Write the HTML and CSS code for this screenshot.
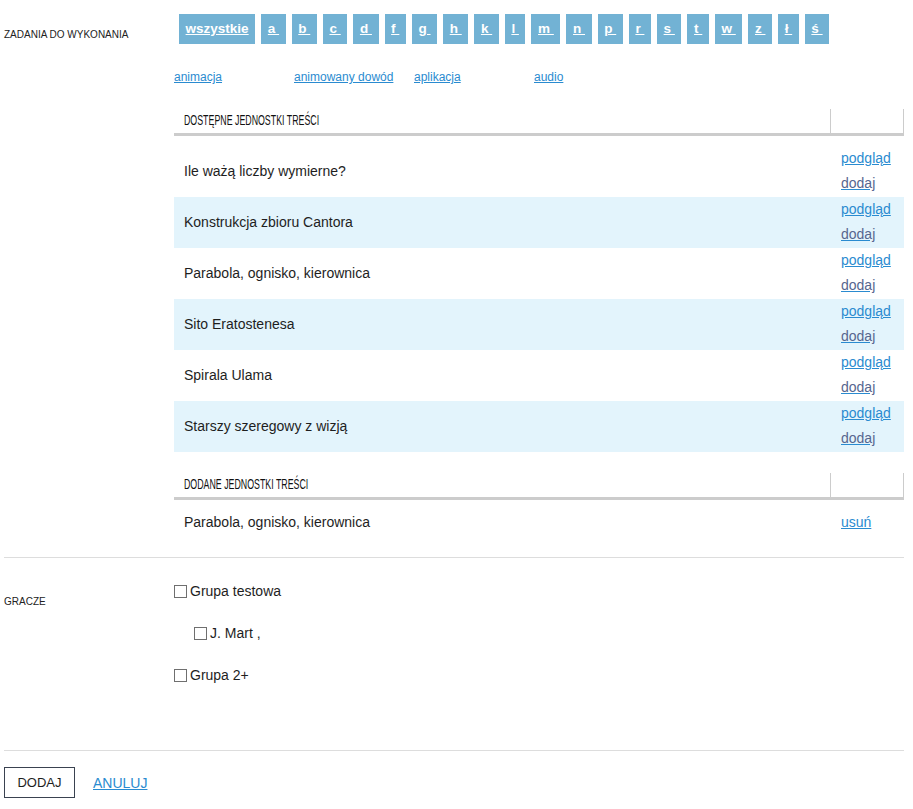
FILE: index.html
```html
<!DOCTYPE html>
<html lang="pl">
<head>
<meta charset="utf-8">
<title>Zadania</title>
<link rel="stylesheet" href="styles.css">
</head>
<body>
<div class="page">
  <section class="section tasks">
    <div class="label label-tasks">ZADANIA DO WYKONANIA</div>
    <div class="content">
      <nav class="letters">
        <a href="#" class="letter">wszystkie</a>
        <a href="#" class="letter">a&nbsp;</a>
        <a href="#" class="letter">b&nbsp;</a>
        <a href="#" class="letter">c&nbsp;</a>
        <a href="#" class="letter">d&nbsp;</a>
        <a href="#" class="letter">f&nbsp;</a>
        <a href="#" class="letter">g&nbsp;</a>
        <a href="#" class="letter">h&nbsp;</a>
        <a href="#" class="letter">k&nbsp;</a>
        <a href="#" class="letter">l&nbsp;</a>
        <a href="#" class="letter">m&nbsp;</a>
        <a href="#" class="letter">n&nbsp;</a>
        <a href="#" class="letter">p&nbsp;</a>
        <a href="#" class="letter">r&nbsp;</a>
        <a href="#" class="letter">s&nbsp;</a>
        <a href="#" class="letter">t&nbsp;</a>
        <a href="#" class="letter">w&nbsp;</a>
        <a href="#" class="letter">z&nbsp;</a>
        <a href="#" class="letter">ł&nbsp;</a>
        <a href="#" class="letter">ś&nbsp;</a>
      </nav>
      <div class="cats">
        <span class="cat"><a href="#">animacja</a></span>
        <span class="cat"><a href="#">animowany dowód</a></span>
        <span class="cat"><a href="#">aplikacja</a></span>
        <span class="cat"><a href="#">audio</a></span>
      </div>

      <div class="thead">
        <div class="th-main"><span class="th-text">DOSTĘPNE JEDNOSTKI TREŚCI</span></div>
        <div class="th-side"></div>
      </div>
      <div class="tbody">
        <div class="tr"><div class="td-main">Ile ważą liczby wymierne?</div><div class="td-side"><a href="#">podgląd</a><a href="#" class="visited">dodaj</a></div></div>
        <div class="tr alt"><div class="td-main">Konstrukcja zbioru Cantora</div><div class="td-side"><a href="#">podgląd</a><a href="#" class="visited">dodaj</a></div></div>
        <div class="tr"><div class="td-main">Parabola, ognisko, kierownica</div><div class="td-side"><a href="#">podgląd</a><a href="#" class="visited">dodaj</a></div></div>
        <div class="tr alt"><div class="td-main">Sito Eratostenesa</div><div class="td-side"><a href="#">podgląd</a><a href="#" class="visited">dodaj</a></div></div>
        <div class="tr"><div class="td-main">Spirala Ulama</div><div class="td-side"><a href="#">podgląd</a><a href="#" class="visited">dodaj</a></div></div>
        <div class="tr alt"><div class="td-main">Starszy szeregowy z wizją</div><div class="td-side"><a href="#">podgląd</a><a href="#" class="visited">dodaj</a></div></div>
      </div>

      <div class="thead thead-added">
        <div class="th-main"><span class="th-text">DODANE JEDNOSTKI TREŚCI</span></div>
        <div class="th-side"></div>
      </div>
      <div class="tbody">
        <div class="tr tr-single"><div class="td-main">Parabola, ognisko, kierownica</div><div class="td-side"><a href="#">usuń</a></div></div>
      </div>
    </div>
  </section>

  <hr class="divider divider-first">

  <section class="section players">
    <div class="label label-players">GRACZE</div>
    <div class="content checks">
      <label class="check"><input type="checkbox"><span>Grupa testowa</span></label>
      <label class="check check-nested"><input type="checkbox"><span>J. Mart ,</span></label>
      <label class="check"><input type="checkbox"><span>Grupa 2+</span></label>
    </div>
  </section>

  <hr class="divider divider-second">

  <div class="actions">
    <button class="btn" type="button">DODAJ</button>
    <a href="#" class="cancel">ANULUJ</a>
  </div>
</div>
</body>
</html>
```
FILE: styles.css
```css
html, body {
  margin: 0;
  padding: 0;
  background: #fff;
}
body {
  font-family: "Liberation Sans", Arial, sans-serif;
  color: #1e1e1e;
  font-size: 14px;
}
.page {
  width: 900px;
  padding: 14px 4px 0 4px;
}
.section {
  display: grid;
  grid-template-columns: 170px 730px;
}
.label {
  font-size: 10px;
  line-height: 12px;
  color: #222;
}
.label-tasks { padding-top: 15px; }
.label-players { padding-top: 38px; }

.letters {
  display: flex;
  gap: 6px;
  margin-left: 5px;
}
.letter {
  display: block;
  height: 30px;
  line-height: 30px;
  padding: 0 6.6px;
  background: #72b2d4;
  color: #fff;
  font-weight: bold;
  font-size: 13.5px;
  text-decoration: underline;
}
.cats {
  display: flex;
  margin-top: 26px;
  line-height: 14px;
  font-size: 12px;
}
.cat { width: 120px; }
a { color: #2a8bd0; }

.thead {
  display: flex;
  margin-top: 24px;
  height: 25px;
  border-bottom: 3px solid #cccccc;
}
.thead-added { margin-top: 20px; }
.th-main {
  flex: 1;
  padding-left: 10px;
  line-height: 25px;
  font-size: 14px;
  color: #111;
  white-space: nowrap;
}
.th-text {
  display: inline-block;
  transform: scaleX(0.63);
  transform-origin: left center;
}
.th-side {
  width: 72px;
  margin-top: 1px;
  border-left: 1px solid #cccccc;
  border-right: 1px solid #cccccc;
}
.tbody { margin-top: 10px; }
.tr {
  display: flex;
  height: 51px;
}
.tr.alt { background: #e3f4fc; }
.tr-single { height: 25px; }
.td-main {
  flex: 1;
  padding-left: 10px;
  padding-bottom: 2px;
  display: flex;
  align-items: center;
}
.td-side {
  width: 63px;
  padding-left: 11px;
}
.td-side a {
  display: block;
  line-height: 25px;
  font-size: 14px;
  width: max-content;
}
.td-side a.visited {
  color: #56668f;
  text-decoration-color: #2a8bd0;
}

.divider {
  border: 0;
  border-top: 1px solid #dddddd;
  margin: 0;
  width: 900px;
}
.divider-first { margin-top: 22px; }
.divider-second { margin-top: 66px; }

.checks {
  display: flex;
  flex-direction: column;
  gap: 24px;
  padding-top: 24px;
}
.check {
  display: flex;
  align-items: center;
  height: 18px;
  line-height: 18px;
  font-size: 14px;
  color: #1e1e1e;
}
.check-nested { padding-left: 20px; }
.check input {
  appearance: none;
  -webkit-appearance: none;
  width: 13px;
  height: 13px;
  margin: 0 3px 0 0;
  border: 1px solid #6f6f6f;
  background: #fff;
  border-radius: 0;
}

.actions {
  display: flex;
  align-items: center;
  gap: 18px;
  margin-top: 16px;
}
.btn {
  width: 71px;
  height: 31px;
  border: 1px solid #3a4250;
  background: #fff;
  font-family: "Liberation Sans", Arial, sans-serif;
  font-size: 13px;
  color: #1e1e1e;
  padding: 0;
}
.cancel {
  font-size: 14px;
  color: #2a8bd0;
}
```
